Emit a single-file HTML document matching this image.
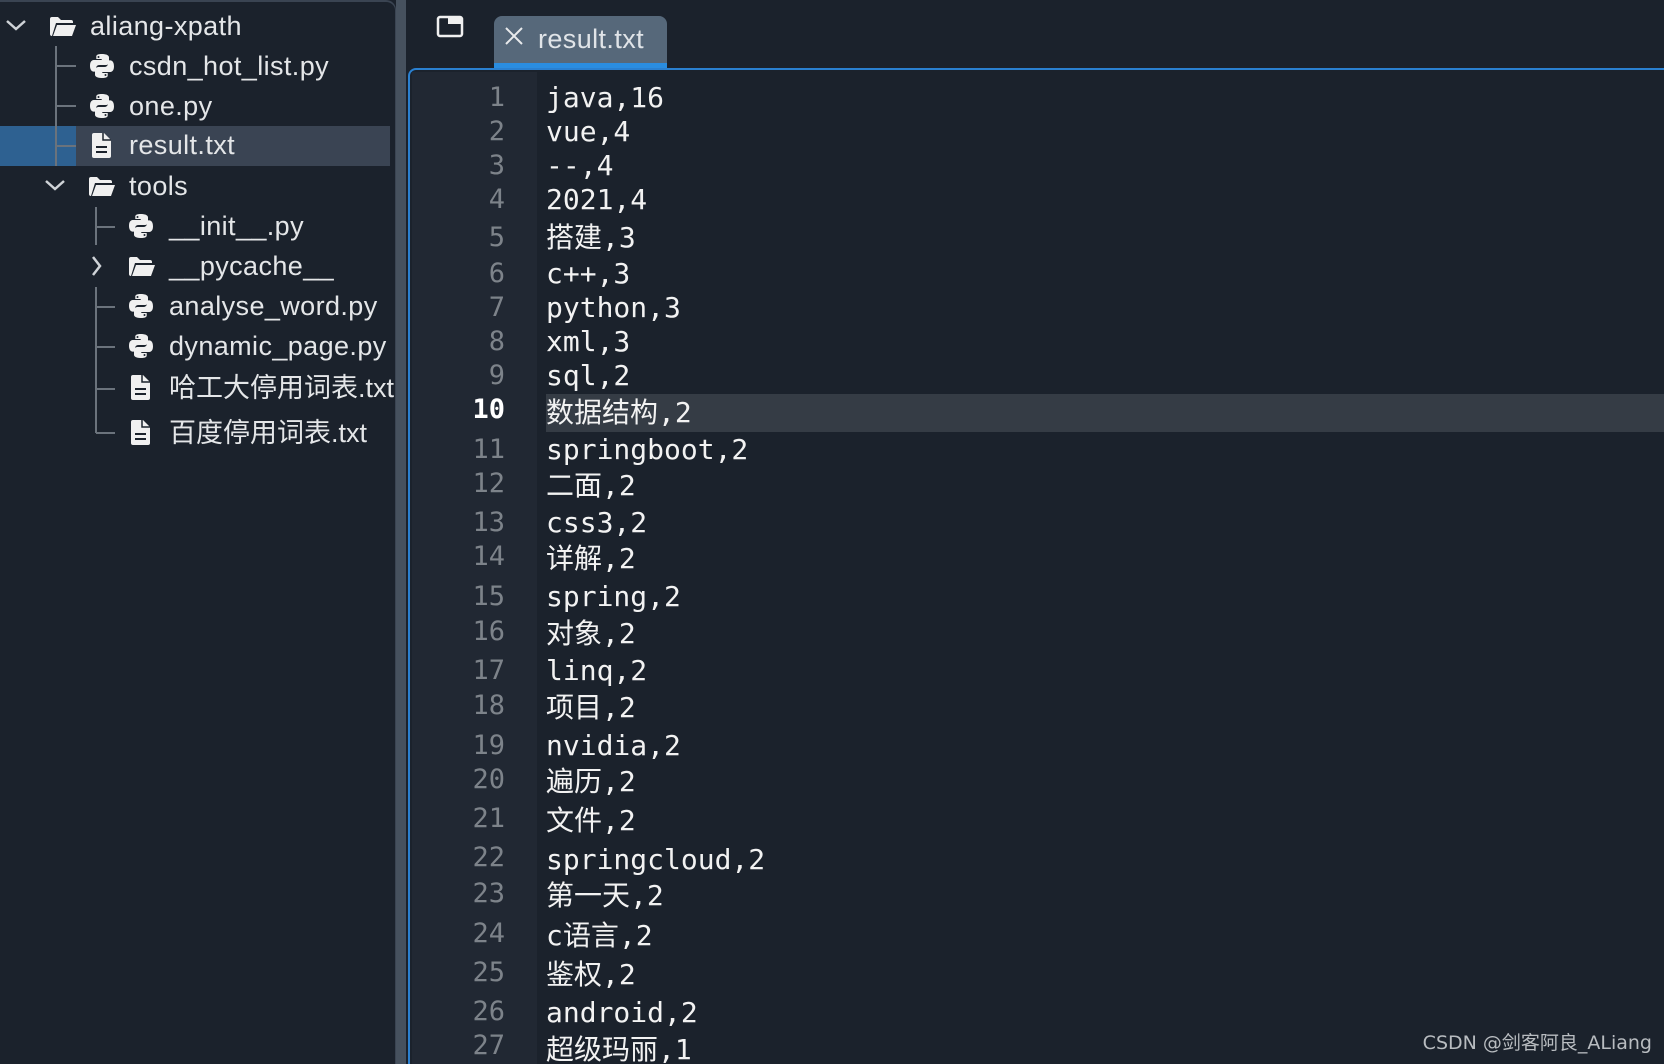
<!DOCTYPE html>
<html><head><meta charset="utf-8"><style>
*{margin:0;padding:0;box-sizing:border-box}
html,body{overflow:hidden}
body{width:1664px;height:1064px;background:#1b222c;position:relative;overflow:hidden;font-family:"Liberation Sans","Noto Sans CJK SC",sans-serif;color:#e4e6e8}
.side{position:absolute;left:0;top:0;width:396px;height:1064px;background:#1b222c;border-top:2px solid #3a4452;border-right:1px solid #3a4452;border-top-right-radius:10px}
.strip{position:absolute;left:396px;top:0;width:10px;height:1064px;background:#46515e}
.row{position:absolute;height:40px;line-height:40px;font-size:27px;letter-spacing:0.4px;white-space:nowrap}
.sel1{position:absolute;left:0;top:126px;width:76px;height:40px;background:#2e6191}
.sel2{position:absolute;left:76px;top:126px;width:314px;height:40px;background:#3a4453}
.tab{position:absolute;left:494px;top:16px;width:173px;height:52px;background:#56687a;border-radius:8px 8px 0 0}
.tab .bl{position:absolute;left:0;bottom:0;width:100%;height:5px;background:#2a8de0}
.tab span{position:absolute;left:44px;top:8px;font-size:27px;letter-spacing:0.4px;color:#e0e4e8}
.ed{position:absolute;left:408px;top:68px;width:1256px;height:996px;border-top:2px solid #2a80d0;border-left:2px solid #2a80d0;border-radius:8px 0 0 0;background:#1b222c}
.gut{position:absolute;left:412px;top:72px;width:125px;height:992px;background:#212833}
.hl{position:absolute;left:546px;top:394px;width:1118px;height:38px;background:#353c45}
.ln{position:absolute;left:412px;width:93px;text-align:right;font-family:"DejaVu Sans Mono","Liberation Mono",monospace;font-size:27px;color:#7d838a;height:36px;line-height:36px}
.tx{position:absolute;left:546px;font-family:"DejaVu Sans Mono","Liberation Mono","Noto Sans CJK SC",monospace;font-size:28px;color:#f2f2f2;height:36px;line-height:36px;white-space:nowrap}
.wm{position:absolute;right:12px;top:1028px;font-size:19px;color:#b8bcc0;font-family:"DejaVu Sans","Noto Sans CJK SC",sans-serif}
</style></head><body>
<div class="side"></div>
<div class="strip"></div>
<div class="sel1"></div><div class="sel2"></div>

<svg width="396" height="460" style="position:absolute;left:0;top:0" fill="none">
<defs>
<g id="py"><path fill="#f0f0f0" d="M11.5 0C6 0 6.3 2.4 6.3 2.4V5h5.4v1H4.2S0 5.5 0 11.6 3.6 17.6 3.6 17.6H6v-3s-.1-3.6 3.6-3.6h6s3.4.1 3.4-3.3V3.4S19.5 0 11.5 0z M8.5 2a1 1 0 1 1 0 2 1 1 0 0 1 0-2z"/><path fill="#f0f0f0" d="M12.5 24c5.5 0 5.2-2.4 5.2-2.4V19h-5.4v-1h7.5s4.2.5 4.2-5.6-3.6-6-3.6-6H18v3s.1 3.6-3.6 3.6h-6s-3.4-.1-3.4 3.3v4.3S4.5 24 12.5 24z M15.5 22a1 1 0 1 1 0-2 1 1 0 0 1 0 2z"/></g>
<g id="fi"><path fill="#f0f0f0" d="M2 0h10l7 7v16a2 2 0 0 1-2 2H2a2 2 0 0 1-2-2V2a2 2 0 0 1 2-2z"/><rect x="4" y="13" width="11" height="2" fill="#1b222c"/><rect x="4" y="18" width="11" height="2" fill="#1b222c"/><path d="M11 0v7h8" stroke="#1b222c" stroke-width="1.5"/></g>
<g id="fo"><path fill="#f0f0f0" d="M0 3a2 2 0 0 1 2-2h6l3 3h10a2 2 0 0 1 2 2v1H6l-4 13H2a2 2 0 0 1-2-2z"/><path fill="#f0f0f0" d="M7 9h19l-4 11H3z"/></g>
</defs>
<path d="M7 21l9 8 9-8" stroke="#cfd3d7" stroke-width="2.5"/>
<path d="M46 181l9 8 9-8" stroke="#cfd3d7" stroke-width="2.5"/>
<path d="M93 257l7 9-7 9" stroke="#cfd3d7" stroke-width="2.5"/>
<rect x="55" y="46" width="2" height="120" fill="#6b737c"/>
<rect x="56" y="65" width="20" height="2" fill="#6b737c"/>
<rect x="56" y="105" width="20" height="2" fill="#6b737c"/>
<rect x="56" y="145" width="20" height="2" fill="#6b737c"/>
<rect x="95" y="207" width="2" height="38" fill="#6b737c"/>
<rect x="96" y="226" width="19" height="2" fill="#6b737c"/>
<rect x="95" y="287" width="2" height="146" fill="#6b737c"/>
<rect x="96" y="306" width="19" height="2" fill="#6b737c"/>
<rect x="96" y="346" width="19" height="2" fill="#6b737c"/>
<rect x="96" y="388" width="19" height="2" fill="#6b737c"/>
<rect x="96" y="432" width="19" height="2" fill="#6b737c"/>
<use href="#fo" x="50" y="16"/>
<use href="#py" x="90" y="54"/>
<use href="#py" x="90" y="94"/>
<use href="#fi" x="92" y="133"/>
<use href="#fo" x="89" y="176"/>
<use href="#py" x="129" y="214"/>
<use href="#fo" x="129" y="256"/>
<use href="#py" x="129" y="294"/>
<use href="#py" x="129" y="334"/>
<use href="#fi" x="131" y="375"/>
<use href="#fi" x="131" y="420"/>
</svg>

<div class="row" style="left:90px;top:6px">aliang-xpath</div>
<div class="row" style="left:129px;top:46px">csdn_hot_list.py</div>
<div class="row" style="left:129px;top:86px">one.py</div>
<div class="row" style="left:129px;top:125px">result.txt</div>
<div class="row" style="left:129px;top:166px">tools</div>
<div class="row" style="left:169px;top:206px">__init__.py</div>
<div class="row" style="left:169px;top:246px">__pycache__</div>
<div class="row" style="left:169px;top:286px">analyse_word.py</div>
<div class="row" style="left:169px;top:326px">dynamic_page.py</div>
<div class="row" style="left:169px;top:368px;letter-spacing:0">哈工大停用词表.txt</div>
<div class="row" style="left:169px;top:413px;letter-spacing:0">百度停用词表.txt</div>

<svg width="30" height="26" style="position:absolute;left:436px;top:14px"><rect x="2" y="3" width="24" height="19" rx="2" fill="none" stroke="#f0f0f0" stroke-width="2.5"/><rect x="12" y="3" width="14" height="7" fill="#f0f0f0"/></svg>
<div class="tab"><svg width="20" height="20" style="position:absolute;left:10px;top:10px"><path d="M2 2l16 16M18 2L2 18" stroke="#e8eaec" stroke-width="2"/></svg><span>result.txt</span><div class="bl"></div></div>

<div class="ed"></div>
<div class="gut"></div>
<div class="hl"></div>

<div class="ln" style="top:80px">1</div><div class="tx" style="top:80px">java,16</div>
<div class="ln" style="top:114px">2</div><div class="tx" style="top:114px">vue,4</div>
<div class="ln" style="top:148px">3</div><div class="tx" style="top:148px">--,4</div>
<div class="ln" style="top:182px">4</div><div class="tx" style="top:182px">2021,4</div>
<div class="ln" style="top:220px">5</div><div class="tx" style="top:220px">搭建,3</div>
<div class="ln" style="top:256px">6</div><div class="tx" style="top:256px">c++,3</div>
<div class="ln" style="top:290px">7</div><div class="tx" style="top:290px">python,3</div>
<div class="ln" style="top:324px">8</div><div class="tx" style="top:324px">xml,3</div>
<div class="ln" style="top:358px">9</div><div class="tx" style="top:358px">sql,2</div>
<div class="ln" style="top:392px;color:#fff;font-weight:bold">10</div><div class="tx" style="top:395px">数据结构,2</div>
<div class="ln" style="top:432px">11</div><div class="tx" style="top:432px">springboot,2</div>
<div class="ln" style="top:466px">12</div><div class="tx" style="top:468px">二面,2</div>
<div class="ln" style="top:505px">13</div><div class="tx" style="top:505px">css3,2</div>
<div class="ln" style="top:539px">14</div><div class="tx" style="top:541px">详解,2</div>
<div class="ln" style="top:579px">15</div><div class="tx" style="top:579px">spring,2</div>
<div class="ln" style="top:614px">16</div><div class="tx" style="top:616px">对象,2</div>
<div class="ln" style="top:653px">17</div><div class="tx" style="top:653px">linq,2</div>
<div class="ln" style="top:688px">18</div><div class="tx" style="top:690px">项目,2</div>
<div class="ln" style="top:728px">19</div><div class="tx" style="top:728px">nvidia,2</div>
<div class="ln" style="top:762px">20</div><div class="tx" style="top:764px">遍历,2</div>
<div class="ln" style="top:801px">21</div><div class="tx" style="top:803px">文件,2</div>
<div class="ln" style="top:840px">22</div><div class="tx" style="top:842px">springcloud,2</div>
<div class="ln" style="top:876px">23</div><div class="tx" style="top:878px">第一天,2</div>
<div class="ln" style="top:916px">24</div><div class="tx" style="top:918px">c语言,2</div>
<div class="ln" style="top:955px">25</div><div class="tx" style="top:957px">鉴权,2</div>
<div class="ln" style="top:994px">26</div><div class="tx" style="top:995px">android,2</div>
<div class="ln" style="top:1028px">27</div><div class="tx" style="top:1032px">超级玛丽,1</div>

<div class="wm">CSDN @剑客阿良_ALiang</div>
</body></html>
